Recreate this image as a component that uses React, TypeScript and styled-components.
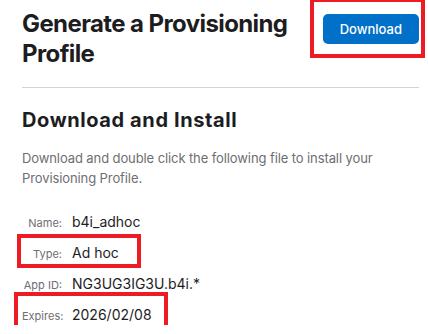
import styled, { createGlobalStyle } from "styled-components";

const GlobalStyle = createGlobalStyle`
  body {
    margin: 0;
    background: #ffffff;
    font-family: Inter, "Noto Sans", sans-serif;
    -webkit-font-smoothing: antialiased;
  }
`;

const Page = styled.div`
  padding: 9px 9px 0 22px;
`;

const Header = styled.header`
  display: flex;
  justify-content: space-between;
  align-items: flex-start;
  gap: 8px;
  padding-bottom: 18px;
  border-bottom: 1px solid #d2d2d7;
`;

const Title = styled.h1`
  margin: 0;
  font-size: 24px;
  line-height: 30px;
  font-weight: 700;
  letter-spacing: -0.6px;
  color: #1d1d1f;
`;

// red annotation frame drawn over the element it wraps
const Marked = styled.div<{ $inset: string }>`
  position: relative;
  flex-shrink: 0;
  width: fit-content;
  &::after {
    content: "";
    position: absolute;
    inset: ${(p) => p.$inset};
    border: 4px solid #ed1c24;
    pointer-events: none;
  }
`;

const DownloadButton = styled.button`
  display: block;
  margin-top: 5px;
  height: 30px;
  padding: 0 17px;
  border: none;
  border-radius: 5px;
  background: #0070c9;
  color: #ffffff;
  font-family: inherit;
  font-size: 13px;
  font-weight: 500;
  cursor: pointer;
`;

const SectionTitle = styled.h2`
  margin: 20px 0 0;
  font-size: 20px;
  line-height: 24px;
  font-weight: 700;
  letter-spacing: 0.6px;
  color: #1d1d1f;
`;

const Intro = styled.p`
  margin: 16px 0 0;
  font-size: 13px;
  line-height: 20px;
  letter-spacing: -0.1px;
  color: #6e6e73;
`;

const Details = styled.div`
  display: flex;
  flex-direction: column;
  gap: 11px;
  margin-top: 24px;
`;

const Row = styled.div`
  display: grid;
  grid-template-columns: 40px auto;
  column-gap: 10px;
  align-items: baseline;
  height: 20px;
  width: fit-content;
`;

const Label = styled.span`
  font-size: 11px;
  text-align: right;
  white-space: nowrap;
  color: #6e6e73;
`;

const Value = styled.span`
  font-size: 14px;
  line-height: 20px;
  color: #1d1d1f;
`;

const details = [
  { label: "Name:", value: "b4i_adhoc" },
  { label: "Type:", value: "Ad hoc", mark: "-9px -22px -5px -5px" },
  { label: "App ID:", value: "NG3UG3IG3U.b4i.*" },
  { label: "Expires:", value: "2026/02/08", mark: "-13px -16px -9px -8px" },
];

export default function App() {
  return (
    <Page>
      <GlobalStyle />
      <Header>
        <Title>Generate a Provisioning Profile</Title>
        <Marked $inset="-11px -6px -14px -13px">
          <DownloadButton>Download</DownloadButton>
        </Marked>
      </Header>
      <SectionTitle>Download and Install</SectionTitle>
      <Intro>
        Download and double click the following file to install your
        Provisioning Profile.
      </Intro>
      <Details>
        {details.map((d) => {
          const row = (
            <Row key={d.label}>
              <Label>{d.label}</Label>
              <Value>{d.value}</Value>
            </Row>
          );
          return d.mark ? (
            <Marked key={d.label} $inset={d.mark}>
              {row}
            </Marked>
          ) : (
            row
          );
        })}
      </Details>
    </Page>
  );
}
